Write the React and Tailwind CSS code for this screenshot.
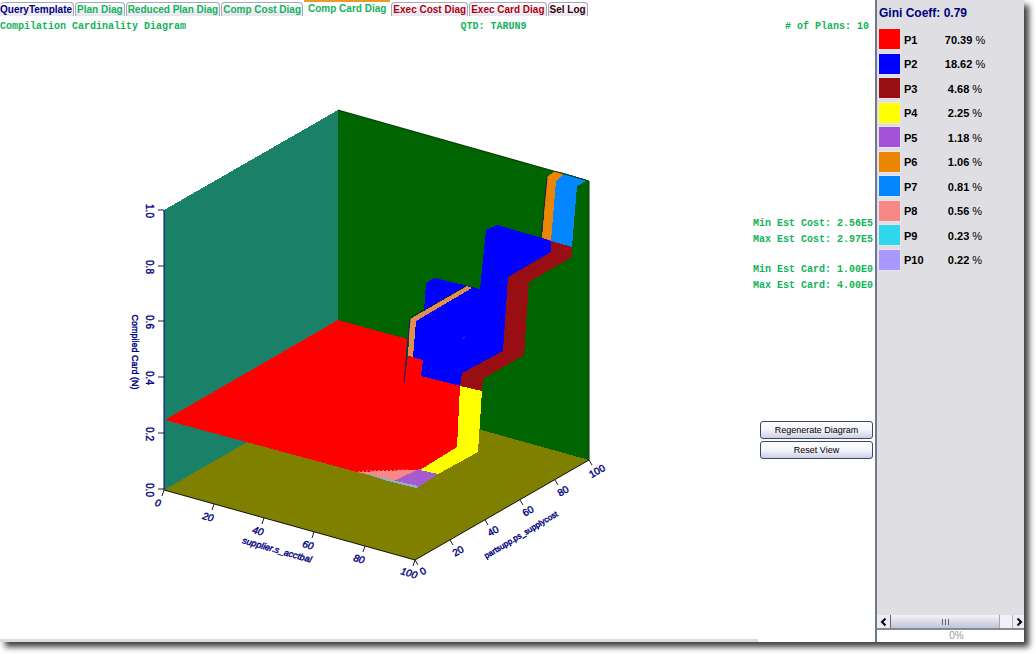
import React from "react";

const TABS = [
  { label: "QueryTemplate", tone: "text-[#000080]" },
  { label: "Plan Diag", tone: "text-[#12b35a]" },
  { label: "Reduced Plan Diag", tone: "text-[#12b35a]" },
  { label: "Comp Cost Diag", tone: "text-[#12b35a]" },
  { label: "Comp Card Diag", tone: "text-[#12b35a]", active: true },
  { label: "Exec Cost Diag", tone: "text-[#b00010]" },
  { label: "Exec Card Diag", tone: "text-[#b00010]" },
  { label: "Sel Log", tone: "text-[#3a0008]" },
];

const PLANS = [
  { id: "P1", share: "70.39", color: "bg-[#ff0000]" },
  { id: "P2", share: "18.62", color: "bg-[#0000ff]" },
  { id: "P3", share: "4.68", color: "bg-[#990e12]" },
  { id: "P4", share: "2.25", color: "bg-[#ffff00]" },
  { id: "P5", share: "1.18", color: "bg-[#a352d8]" },
  { id: "P6", share: "1.06", color: "bg-[#eb8604]" },
  { id: "P7", share: "0.81", color: "bg-[#0486ff]" },
  { id: "P8", share: "0.56", color: "bg-[#f88888]" },
  { id: "P9", share: "0.23", color: "bg-[#30d6ea]" },
  { id: "P10", share: "0.22", color: "bg-[#a898ff]" },
];

const Z_TICKS = [
  ["1.0", 211],
  ["0.8", 267],
  ["0.6", 322],
  ["0.4", 378],
  ["0.2", 434],
  ["0.0", 490],
];

const X_TICKS = [
  ["0", 164, 490],
  ["20", 214, 504],
  ["40", 264, 518],
  ["60", 314, 532],
  ["80", 365, 546],
  ["100", 415, 560],
];

const Y_TICKS = [
  ["0", 415, 560],
  ["20", 450, 540],
  ["40", 485, 520],
  ["60", 520, 500],
  ["80", 555, 480],
  ["100", 589, 460],
];

function AxisText({ x, y, angle, size = 10, italic = false, children }) {
  return (
    <text
      x={x}
      y={y}
      transform={`rotate(${angle} ${x} ${y})`}
      fontSize={size}
      fontStyle={italic ? "italic" : "normal"}
      textAnchor="middle"
      dominantBaseline="central"
      fill="#000080"
      stroke="#000080"
      strokeWidth="0.4"
      fontFamily="'Liberation Sans', Arial, sans-serif"
    >
      {children}
    </text>
  );
}

function CardinalityPlot() {
  return (
    <svg viewBox="0 40 758 598" className="block h-auto w-full" role="img" aria-label="Compilation cardinality surface">
      <g shapeRendering="crispEdges">
        <polygon points="164,210 338,110 338,390 164,490" fill="#1b8068" />
        <polygon points="338,110 589,181 589,460 338,390" fill="#006400" />
        <polygon points="164,490 338,390 589,460 415,560" fill="#808000" />
        <polygon points="165,420 338,320 407,339 404,383 408,356 424,360 422,376 461,386 457,447 420,470 398,479 357,472" fill="#ff0000" />
        <polygon points="358,472 410,470 419,470 398,480 388,480" fill="#f88888" />
        <polygon points="419,469 438,474 417,488 396,480" fill="#a85ad0" />
        <polygon points="360,472 397,481 418,486 416,488 388,481" fill="#94acd8" />
        <polygon points="460,386 482,391 478,452 438,474 420,470 457,447" fill="#ffff00" />
        <polygon points="426,283 435,278 480,289 486,230 497,225 542,238 552,241 551,252 508,277 503,351 462,373 461,386 421,376 423,360 408,356 411,319 424,311" fill="#0000ff" />
        <polygon points="551,241 572,247 572,257 529,282 524,355 483,379 482,391 460,386 462,373 503,351 508,277 551,252" fill="#990e12" />
        <polygon points="410,319 467,286 472,288 416,321 413,357 408,356" fill="#e0904a" />
        <polygon points="547,177 555,171 565,173 556,181 551,241 542,238" fill="#eb8604" />
        <polygon points="564,173 588,180 577,186 572,247 551,241 556,181" fill="#0486ff" />
      </g>
      <g fill="none" strokeWidth="1">
        <path d="M410 319 L404 383" stroke="#33107a" />
        <path d="M410 318 L466 286" stroke="#102030" />
        <path d="M547 178 L541 238" stroke="#202040" />
        <path d="M358 472 L366 471 L410 470" stroke="#f88888" strokeDasharray="2 2" />
        <path d="M164 210 V490" stroke="#000080" />
        <path d="M164 490 L415 560 L589 460" stroke="#101010" />
        <path d="M338 110 L589 181 V460" stroke="#063806" />
        <path d="M463 339 l1 -2 h1" stroke="#5030e0" />
      </g>
      <g stroke="#202020" strokeWidth="1">
        {Z_TICKS.map(([label, y]) => (
          <line key={label} x1="158" x2="164" y1={y - 1} y2={y - 1} />
        ))}
        {X_TICKS.map(([label, x, y]) => (
          <line key={label} x1={x} y1={y} x2={x - 2} y2={y + 6} />
        ))}
        {Y_TICKS.map(([label, x, y]) => (
          <line key={label} x1={x} y1={y} x2={x + 3} y2={y + 5} />
        ))}
      </g>
      {Z_TICKS.map(([label, y]) => (
        <AxisText key={label} x={149} y={y} angle={90}>{label}</AxisText>
      ))}
      {X_TICKS.map(([label, x, y]) => (
        <AxisText key={label} x={x - 6} y={y + 13} angle={16} italic>{label}</AxisText>
      ))}
      {Y_TICKS.map(([label, x, y]) => (
        <AxisText key={label} x={x + 8} y={y + 11} angle={-30}>{label}</AxisText>
      ))}
      <AxisText x={135} y={352} angle={90} size={9}>Compiled Card (N)</AxisText>
      <AxisText x={277} y={550} angle={16} size={9} italic>supplier.s_acctbal</AxisText>
      <AxisText x={521} y={535} angle={-31} size={8}>partsupp.ps_supplycost</AxisText>
    </svg>
  );
}

function TabBar() {
  return (
    <nav role="tablist" className="flex h-4 items-end gap-px pr-2">
      {TABS.map((tab) => (
        <button
          key={tab.label}
          type="button"
          role="tab"
          aria-selected={Boolean(tab.active)}
          className={
            tab.active
              ? `h-4 border-t-2 border-[#eb9a28] bg-white px-1 text-[10px] leading-[14px] font-bold whitespace-nowrap ${tab.tone}`
              : `h-[14px] rounded-t-sm border border-b-0 border-[#a4a8b8] bg-linear-to-b from-white to-[#e6e6f0] px-px text-[10px] leading-[14px] font-bold whitespace-nowrap first:border-l-0 first:pl-0 ${tab.tone}`
          }
        >
          {tab.label}
        </button>
      ))}
    </nav>
  );
}

function PushButton({ children }) {
  return (
    <button
      type="button"
      className="h-[18px] w-full rounded-[3px] border border-[#3c4668] bg-linear-to-b from-white via-[#f4f4fc] to-[#ccd0e4] text-[9px] leading-4 whitespace-nowrap text-black"
    >
      {children}
    </button>
  );
}

function Legend() {
  return (
    <aside className="flex w-[149px] shrink-0 flex-col border-l-2 border-[#70788c] bg-[#dfdfe3]">
      <h2 className="pt-1 pl-0.5 text-[12px] leading-[18px] font-bold text-[#000080]">Gini Coeff: 0.79</h2>
      <table className="mt-[5px] ml-0.5 h-[245px] w-[112px] border-collapse text-[11px] leading-none font-bold text-black">
        <tbody>
          {PLANS.map((plan) => (
            <tr key={plan.id}>
              <td className="w-[25px] p-0">
                <div className={`h-5 w-[21px] ring-1 ring-[#e8e4ee] ${plan.color}`} />
              </td>
              <th scope="row" className="p-0 pt-0.5 text-left">{plan.id}</th>
              <td className="w-[52px] p-0 pt-0.5 text-center">
                {plan.share} <span className="font-normal">%</span>
              </td>
            </tr>
          ))}
        </tbody>
      </table>
      <div className="mt-auto flex h-[15px] border-b-2 border-[#868a98] bg-[#f0f0f6]">
        <button type="button" aria-label="Scroll left" className="flex w-[14px] items-center justify-center border-r border-[#60687c] bg-[#ececf4]">
          <svg viewBox="0 0 8 8" className="size-2" fill="none" stroke="#000" strokeWidth="2"><path d="M5.5 0.5 L2 4 L5.5 7.5" /></svg>
        </button>
        <div className="flex flex-1 pr-3">
          <div className="flex flex-1 items-center justify-center border-r border-[#a0a4b4] bg-linear-to-b from-[#f4f4fa] to-[#c0c4d6]">
            <svg viewBox="0 0 8 6" className="h-1.5 w-2" stroke="#667"><path d="M1.5 0 V6 M4.5 0 V6 M7.5 0 V6" /></svg>
          </div>
        </div>
        <button type="button" aria-label="Scroll right" className="flex w-3 items-center justify-center border-l border-[#b0b4c0] bg-[#ececf4]">
          <svg viewBox="0 0 8 8" className="size-2" fill="none" stroke="#000" strokeWidth="2"><path d="M2.5 0.5 L6 4 L2.5 7.5" /></svg>
        </button>
      </div>
      <div className="h-3 bg-white pl-3 text-center text-[10px] leading-3 text-[#9a9a9a]">0%</div>
    </aside>
  );
}

export default function App() {
  return (
    <div className="min-h-screen overflow-hidden bg-white pr-3 pb-3 font-['Liberation_Sans',Arial,sans-serif]">
      <div className="flex min-h-[calc(100vh-12px)] bg-white shadow-[5px_5px_6px_rgba(0,0,0,0.75)]">
        <main className="flex min-w-0 flex-1 flex-col">
          <TabBar />
          <div className="grid h-6 grid-cols-[53%_1fr_auto] items-start pt-[3px] pr-1.5 font-['Liberation_Mono',monospace] text-[10px] leading-4 font-bold text-[#12b35a]">
            <h1>Compilation Cardinality Diagram</h1>
            <p>QTD: TARUN9</p>
            <p># of Plans: 10</p>
          </div>
          <div className="flex flex-1">
            <div className="flex min-w-0 flex-1 flex-col">
              <CardinalityPlot />
              <div className="mt-auto h-[3px] bg-[#dcdcdc]" />
            </div>
            <div className="flex w-[117px] shrink-0 flex-col items-end pt-44 pr-0.5">
              <div className="font-['Liberation_Mono',monospace] text-[10px] leading-4 font-bold whitespace-nowrap text-[#12b35a]">
                <p>Min Est Cost: 2.56E5</p>
                <p>Max Est Cost: 2.97E5</p>
                <p className="mt-[14px]">Min Est Card: 1.00E0</p>
                <p>Max Est Card: 4.00E0</p>
              </div>
              <div className="mt-[127px] flex w-[113px] flex-col gap-0.5">
                <PushButton>Regenerate Diagram</PushButton>
                <PushButton>Reset View</PushButton>
              </div>
            </div>
          </div>
        </main>
        <Legend />
      </div>
    </div>
  );
}
